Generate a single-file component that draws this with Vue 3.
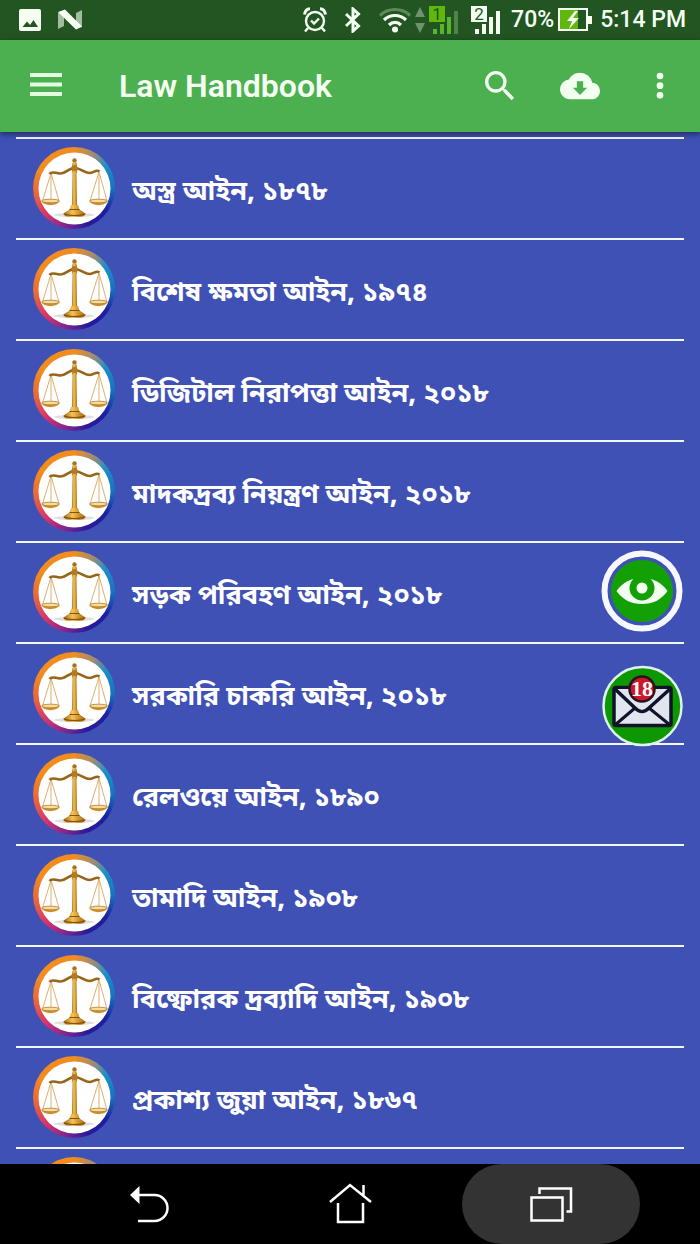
<template>
  <div class="screen">

    <!-- STATUS BAR -->
    <div class="status">
      <div class="status-left">
        <svg width="22" height="22" viewBox="0 0 22 22">
          <rect width="22" height="22" rx="2" fill="#f4fff2" />
          <path d="M3.500 18l4.500-5.500 3 3.500 3.500-5L19 18z" fill="#225522" />
        </svg>
        <svg width="24" height="22" viewBox="0 0 24 22">
          <path d="M0 4l6-2v15l-6 3zM18 4l6-3v17l-6 2z" fill="#a3bda3" />
          <path d="M0 3l7-2.500L24 17.500l-6 3z" fill="#f4fff2" />
        </svg>
      </div>

      <div class="status-right">
        <svg width="24" height="26" viewBox="0 0 24 26" fill="none" stroke="#f4fff2" stroke-width="2.400">
          <circle cx="12" cy="14" r="9" />
          <path d="M8 13.500l3 3 5-5M5 21l-3 3.500M19 21l3 3.500" />
          <path d="M1.500 7.500C2 4 4 2 7 1.800M22.500 7.500C22 4 20 2 17 1.800" stroke-width="3" />
        </svg>
        <svg width="16" height="26" viewBox="0 0 16 26" fill="none" stroke="#f4fff2" stroke-width="3">
          <path d="M1 7l12.500 12L8 24V2l5.500 5L1 19" />
        </svg>
        <div class="network">
          <svg width="32" height="26" viewBox="0 0 32 26" fill="none" stroke-width="3.200">
            <path d="M1 8.500C9 0.500 23 0.500 31 8.500" stroke="#5f8a5c" />
            <path d="M5 13c6-6 16-6 22 0M10 18c3.500-3.500 8.500-3.500 12 0" stroke="#f4fff2" />
            <circle cx="16" cy="22.500" r="3" fill="#f4fff2" />
          </svg>
          <svg width="10" height="26" viewBox="0 0 10 26" fill="#6f946c">
            <path d="M5 0l5 10H0zM5 26l5-10H0z" />
          </svg>
          <div class="sim first">
            <span>1</span>
            <svg width="30" height="28" viewBox="0 0 30 28">
              <path d="M4 23h4v5H4zM11 18h4v10h-4zM18 11h4v17h-4z" fill="#58b52c" />
              <path d="M25 5h4v23h-4z" fill="#4f844b" />
            </svg>
          </div>
        </div>
        <div class="sim second">
          <span>2</span>
          <svg width="30" height="28" viewBox="0 0 30 28" fill="#f4fff2">
            <path d="M4 23h4v5H4zM11 18h4v10h-4zM18 11h4v17h-4zM25 5h4v23h-4z" />
          </svg>
        </div>
        <div class="power">
          <span>70%</span>
          <svg width="34" height="24" viewBox="0 0 34 24">
            <rect x="1" y="1" width="28" height="21" fill="#225522" stroke="#f4fff2" stroke-width="2" />
            <path d="M2 2h18v19H2z" fill="#5fb80b" />
            <path d="M30 8h4v8h-4z" fill="#f4fff2" />
            <path d="M17 3L9 13h5l-3 8 10-11h-6l5-7z" fill="#f4fff2" />
          </svg>
        </div>
        <span>5:14 PM</span>
      </div>
    </div>

    <!-- APP BAR -->
    <header class="bar">
      <button class="icon-btn" aria-label="Menu">
        <svg width="40" height="40" viewBox="0 0 40 40" fill="#e4fbe0">
          <path d="M4 7h32v4H4zM4 16.500h32v4H4zM4 26h32v4H4z" />
        </svg>
      </button>
      <h1 class="title">Law Handbook</h1>
      <div class="bar-actions">
        <button class="icon-btn" aria-label="Search">
          <svg width="40" height="40" viewBox="0 0 24 24" fill="#f2fff0">
            <path d="M15.500 14h-.79l-.28-.27A6.470 6.470 0 0 0 16 9.500 6.500 6.500 0 1 0 9.500 16c1.610 0 3.090-.59 4.230-1.570l.27.28v.79l5 4.990L20.490 19l-4.990-5zm-6 0a4.500 4.500 0 1 1 0-9 4.500 4.500 0 0 1 0 9z" />
          </svg>
        </button>
        <button class="icon-btn" aria-label="Download">
          <svg width="40" height="40" viewBox="0 0 24 24" fill="#f2fff0">
            <path d="M19.350 10.040A7.490 7.490 0 0 0 12 4C9.110 4 6.600 5.640 5.350 8.040A5.994 5.994 0 0 0 0 14c0 3.310 2.690 6 6 6h13c2.760 0 5-2.240 5-5 0-2.640-2.050-4.780-4.650-4.960z" />
            <path d="M16.300 13L12 17.400 7.700 13h2.400V9.200h3.800V13z" fill="#4caf50" />
          </svg>
        </button>
        <button class="icon-btn" aria-label="More options">
          <svg width="40" height="40" viewBox="0 0 24 24" fill="#f2fff0">
            <circle cx="12" cy="6" r="2" />
            <circle cx="12" cy="11.800" r="2" />
            <circle cx="12" cy="17.600" r="2" />
          </svg>
        </button>
      </div>
    </header>

    <!-- LIST -->
    <main class="content">
      <ul class="laws">
        <li v-for="law in laws" :key="law">
          <a href="#" class="law">
            <span class="badge">
              <svg width="82" height="82" viewBox="0 0 82 82" fill="none">
                <defs>
                  <linearGradient id="gold" x1="0" x2="1" y1="0" y2="0">
                    <stop offset="0" stop-color="#9c6410" />
                    <stop offset="0.400" stop-color="#f2c458" />
                    <stop offset="1" stop-color="#a8650c" />
                  </linearGradient>
                </defs>
                <circle cx="41.500" cy="41.500" r="36" fill="#fff" />
                <ellipse cx="41" cy="68" rx="20" ry="2" fill="#dedede" />
                <path d="M18 26L9.500 54M18 26l8 28M66 25l-9 29M66 25l8 29M18 26v28M66 25v29" stroke="#dcb070" />
                <path d="M16.500 27c2-3 5-1 10.500-.5 6 .5 8-5.500 14.500-5.500S51 26 57 26c4 0 6-4 9.500-1.500" stroke="#96651a" stroke-width="2.600" />
                <path d="M8.500 54h18c-2 5.500-16 5.500-18 0zM56.500 54h18c-2 5.500-16 5.500-18 0z" fill="#cf8f2b" />
                <ellipse cx="17.500" cy="54" rx="9" ry="1.800" fill="#f5dca3" stroke="#b27a22" stroke-width="0.800" />
                <ellipse cx="65.500" cy="54" rx="9" ry="1.800" fill="#f5dca3" stroke="#b27a22" stroke-width="0.800" />
                <circle cx="41.500" cy="13.500" r="2.200" fill="#a8711a" />
                <path d="M39.500 15.500h4l1 7-1 4 .6 32h-5.200l.6-32-1-4z" fill="url(#gold)" />
                <circle cx="41.500" cy="21" r="3" fill="#b57a20" />
                <path d="M38 58h7l1.500 4.500 6 4c0 3-5 3.500-11 3.500s-11-.5-11-3.500l6-4z" fill="url(#gold)" />
                <path d="M36.500 62.500h10M31 67c5 2 16 2 21 0" stroke="#8a5008" stroke-width="1.200" />
              </svg>
            </span>
            <span class="law-name">{{ law }}</span>
          </a>
        </li>
      </ul>

      <div class="floating">
        <button class="fab" aria-label="View">
          <svg width="82" height="82" viewBox="0 0 82 82">
            <circle cx="41" cy="41" r="37.500" fill="#3f51b5" stroke="#f7f8ff" stroke-width="6" />
            <circle cx="41" cy="41" r="31" fill="#12a005" />
            <path d="M15.500 41C22 32 30 28 41 28s19 4 25.500 13C60 50 52 54 41 54s-19-4-25.500-13z" fill="#f2fff0" />
            <circle cx="41" cy="38" r="12.500" fill="#12a005" />
            <path d="M32 24h18v5H32z" fill="#12a005" />
            <circle cx="41" cy="38" r="5.500" fill="#f2fff0" />
          </svg>
        </button>
        <button class="fab" aria-label="18 messages">
          <svg width="82" height="82" viewBox="0 0 82 82">
            <circle cx="41.500" cy="41" r="39" fill="#0d9703" stroke="#dff3ea" stroke-width="2.500" />
            <rect x="13" y="22.500" width="57" height="38" rx="2" fill="#dfe6ed" stroke="#10132a" stroke-width="3.500" />
            <path d="M14 60l20-17M69 60L48 43" stroke="#10132a" stroke-width="3" />
            <path d="M14 24l20 19c5 5 9 5 14 0l21-19" fill="#dfe6ed" stroke="#10132a" stroke-width="3.500" />
            <circle cx="41" cy="24" r="12.500" fill="#cf1729" stroke="#2b1020" stroke-width="2.500" />
            <text x="41" y="31" text-anchor="middle" class="count">18</text>
          </svg>
        </button>
      </div>
    </main>

    <!-- NAVIGATION -->
    <nav class="nav">
      <button class="nav-btn" aria-label="Back">
        <svg width="44" height="44" viewBox="0 0 44 44" fill="none" stroke="#fff" stroke-width="2.500">
          <path d="M12 13h15.500a13 13 0 0 1 0 26H11" />
          <path d="M3 13l9.500-9v18z" fill="#fff" stroke="none" />
        </svg>
      </button>
      <button class="nav-btn" aria-label="Home">
        <svg width="44" height="44" viewBox="0 0 44 44" fill="none" stroke="#fff" stroke-width="2.500">
          <path d="M2 20L22 3l21 17M10 21v19h25V21M35.500 13V3" />
        </svg>
      </button>
      <button class="nav-btn active" aria-label="Recent apps">
        <svg width="44" height="44" viewBox="0 0 44 44" fill="none" stroke="#fff" stroke-width="2.500">
          <path d="M2.500 15.500h31v23h-31zM10.500 12V6.500H42v23h-4.500" />
        </svg>
      </button>
    </nav>

  </div>
</template>

<script setup>
const laws = [
  'অস্ত্র আইন, ১৮৭৮',
  'বিশেষ ক্ষমতা আইন, ১৯৭৪',
  'ডিজিটাল নিরাপত্তা আইন, ২০১৮',
  'মাদকদ্রব্য নিয়ন্ত্রণ আইন, ২০১৮',
  'সড়ক পরিবহণ আইন, ২০১৮',
  'সরকারি চাকরি আইন, ২০১৮',
  'রেলওয়ে আইন, ১৮৯০',
  'তামাদি আইন, ১৯০৮',
  'বিষ্ফোরক দ্রব্যাদি আইন, ১৯০৮',
  'প্রকাশ্য জুয়া আইন, ১৮৬৭',
  ''
]
</script>

<style scoped>
.screen {
  height: 100vh;
  display: flex;
  flex-direction: column;
  background: #3f51b5;
  font-family: Roboto, "Noto Sans", sans-serif;
}

button {
  border: none;
  background: none;
  padding: 0;
  cursor: pointer;
}

svg {
  display: block;
}

/* STATUS BAR */
.status {
  flex: none;
  height: 40px;
  padding: 0 14px 0 19px;
  display: flex;
  align-items: center;
  justify-content: space-between;
  background: #225522;
  color: #f4fff2;
  font-size: 24px;
  font-weight: 500;
}

.status-left {
  display: flex;
  gap: 17px;
}

.status-right {
  display: flex;
  align-items: center;
}

.status-right > svg {
  margin-right: 18px;
}

.network {
  display: flex;
  align-items: center;
  gap: 4px;
  margin-right: 12px;
}

.sim {
  position: relative;
}

.sim span {
  position: absolute;
  top: 0;
  left: 0;
  width: 16px;
  height: 16px;
  font-size: 17px;
  font-weight: 400;
  line-height: 16px;
  text-align: center;
  color: #225522;
}

.first span {
  background: #5fb80b;
}

.second span {
  background: #f4fff2;
}

.status-right > span,
.power {
  font-size: 23px;
  line-height: 28px;
}

.power {
  display: flex;
  align-items: center;
  gap: 4px;
  margin: 0 8px 0 10px;
}

/* APP BAR */
.bar {
  flex: none;
  height: 92px;
  padding: 0 20px 0 26px;
  display: flex;
  align-items: center;
  background: #4caf50;
  box-shadow: 0 2px 6px rgba(0, 0, 0, 0.5);
  z-index: 1;
}

.title {
  flex: 1;
  margin: 0 0 0 53px;
  color: #f4fff2;
  font-size: 32px;
  font-weight: 600;
}

.bar-actions {
  display: flex;
  gap: 40px;
}

/* LIST */
.content {
  flex: 1;
  min-height: 0;
  position: relative;
  overflow: hidden;
}

.laws {
  list-style: none;
  height: 100%;
  margin: 0;
  padding: 5px 16px 0;
  box-sizing: border-box;
  overflow: hidden;
}

.law {
  display: flex;
  align-items: center;
  gap: 17px;
  height: 97px;
  padding: 0 0 2px 17px;
  border-top: 2px solid #f4f6ff;
  color: #fff;
  text-decoration: none;
}

.badge {
  flex: none;
  border-radius: 50%;
  background: conic-gradient(#f28c1e, #a08d72 30deg, #1c8fc8 55deg, #1673c0 90deg, #1c20a0 125deg, #2a1a9a 160deg, #7a2590 190deg, #d6336c 225deg, #e8663a 260deg, #f28c1e 300deg);
}

.law-name {
  padding-top: 10px;
  font-family: "Noto Sans Bengali", "Noto Sans", sans-serif;
  font-size: 27px;
  font-weight: 700;
  line-height: 40px;
}

.floating {
  position: absolute;
  top: 418px;
  right: 17px;
  display: flex;
  flex-direction: column;
  gap: 33px;
}

.fab {
  border-radius: 50%;
}

.count {
  font-family: "Liberation Serif", serif;
  font-size: 22px;
  font-weight: 700;
  fill: #fff;
}

/* NAVIGATION */
.nav {
  flex: none;
  height: 80px;
  display: flex;
  justify-content: center;
  gap: 23px;
  background: #000;
}

.nav-btn {
  width: 178px;
  display: flex;
  align-items: center;
  justify-content: center;
  border-radius: 40px;
}

.active {
  background: #333;
}
</style>

<style>
body {
  margin: 0;
  background: #000;
}
</style>
